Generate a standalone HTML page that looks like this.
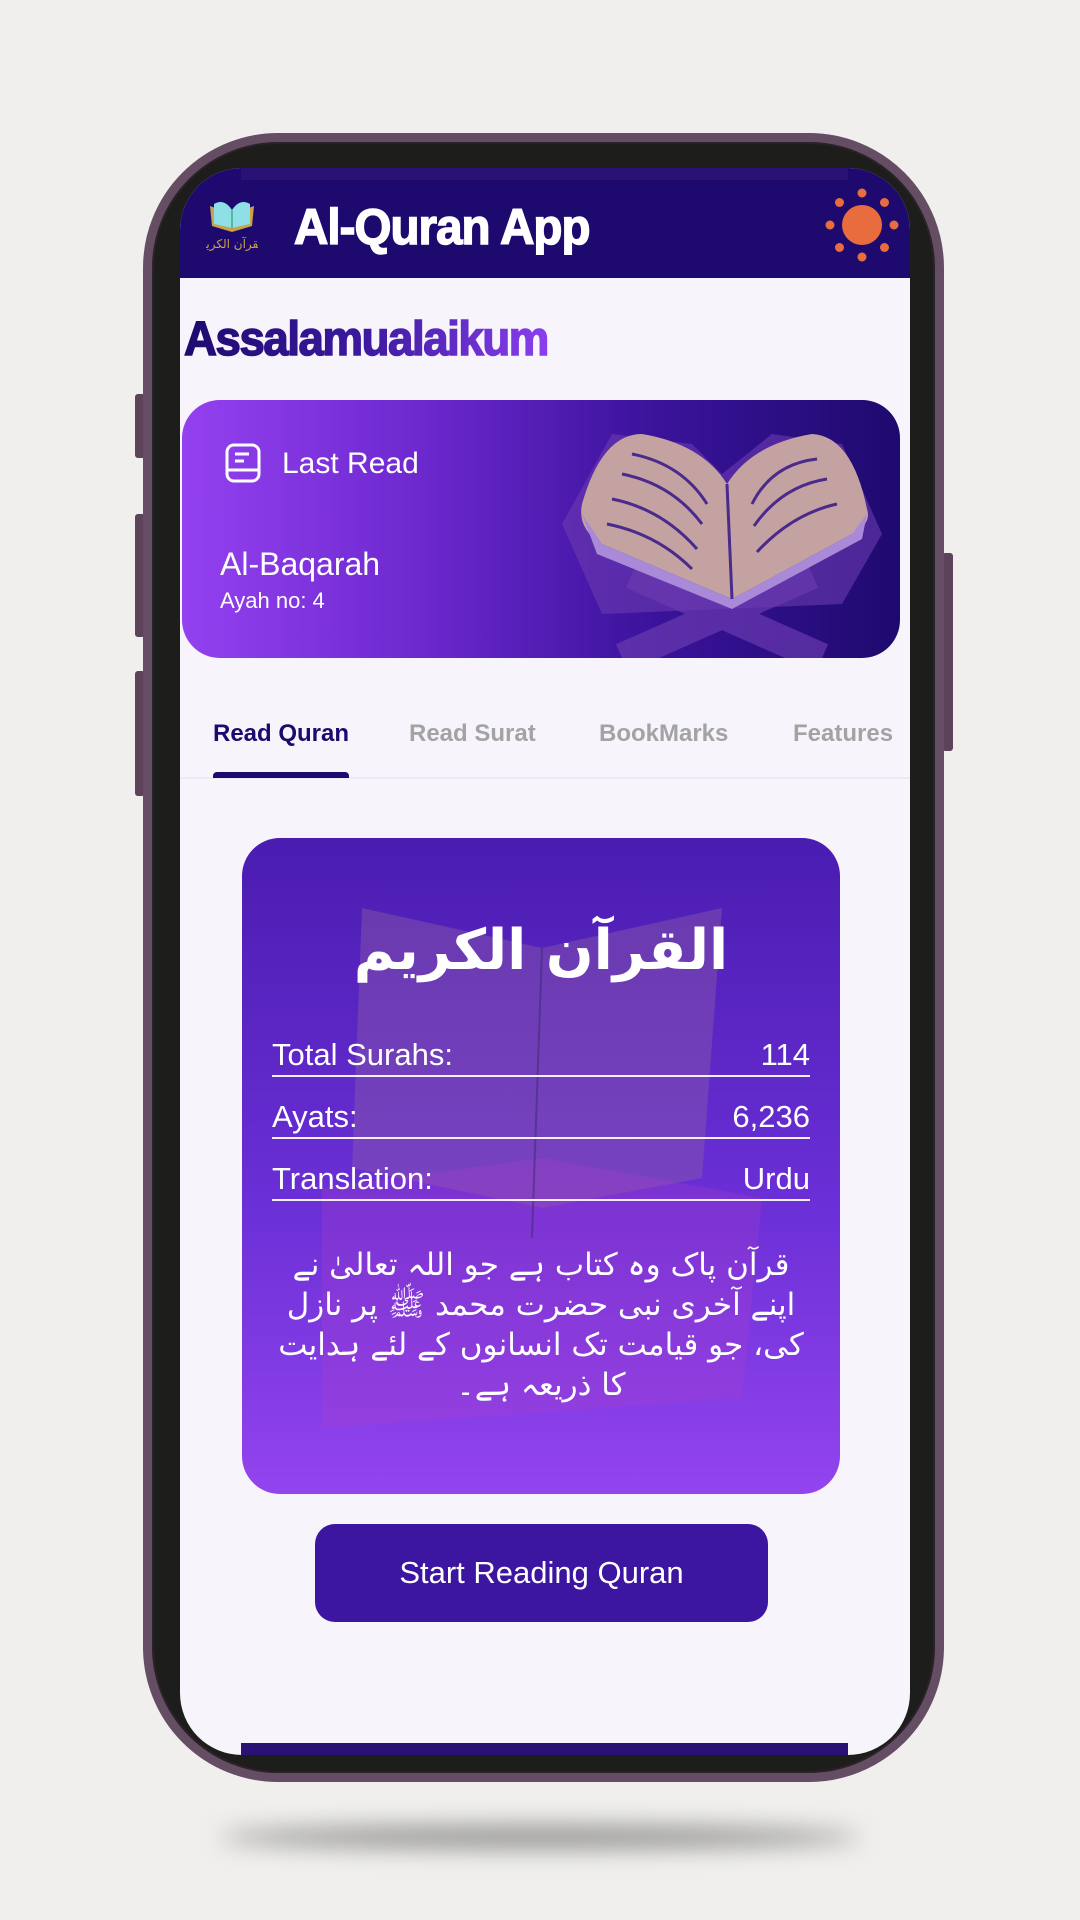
<!DOCTYPE html>
<html><head><meta charset="utf-8"><style>
*{margin:0;padding:0;box-sizing:border-box}
body{width:1080px;height:1920px;background:#f0efed;position:relative;overflow:hidden;font-family:"Liberation Sans","Noto Sans CJK SC",sans-serif}
.shadow{position:absolute;left:220px;top:1826px;width:640px;height:22px;border-radius:50%;background:rgba(0,0,0,.4);filter:blur(12px)}
.btn{position:absolute;background:#5d4359;border-radius:3px}
.phone{position:absolute;left:143px;top:133px;width:801px;height:1649px;border-radius:135px;background:#1d1d1b;border:9px solid #654e63;box-shadow:inset 0 0 0 2px #2a2228}
.screen{position:absolute;left:180px;top:168px;width:730px;height:1587px;border-radius:62px;background:#f7f5fb;overflow:hidden}
.hdr{position:absolute;left:0;top:0;width:730px;height:110px;background:#1e0a6e}
.strip{position:absolute;left:61px;width:607px;height:12px;background:#2a1275}
.title{position:absolute;left:114px;top:30px;color:#fff;font-size:50px;font-weight:900;letter-spacing:-1px;-webkit-text-stroke:1.5px #fff;transform:scaleX(.95);transform-origin:left}
.greet{position:absolute;left:4px;top:144px;font-size:48px;font-weight:900;letter-spacing:-1.5px;-webkit-text-stroke:1.5px;background:linear-gradient(90deg,#1e0a6e 0%,#3c1aa0 50%,#8a3fee 100%);-webkit-background-clip:text;color:transparent;transform:scaleX(.95);transform-origin:left}
.lr{position:absolute;left:2px;top:232px;width:718px;height:258px;border-radius:38px;background:linear-gradient(90deg,#9441f0 0%,#6a27cc 35%,#3b139c 65%,#1e0a6e 100%);overflow:hidden;color:#fff}
.tab{position:absolute;top:552px;font-size:24px;font-weight:bold;color:#a3a3a3}
.card{position:absolute;left:62px;top:670px;width:598px;height:656px;border-radius:38px;background:linear-gradient(180deg,#4a1cb0 0%,#6a2fd6 55%,#9344ee 100%);overflow:hidden;color:#fff}
.row{position:absolute;left:30px;width:538px;height:40px;border-bottom:2.5px solid #f3eefc;font-size:31px;display:flex;justify-content:space-between;align-items:flex-end;padding-bottom:2px}
.urdu{position:absolute;left:25px;top:407px;width:548px;text-align:center;direction:rtl;font-family:"DejaVu Sans",sans-serif;font-size:31px;line-height:40px}
.start{position:absolute;left:135px;top:1356px;width:453px;height:98px;border-radius:20px;background:#3c16a0;color:#fff;font-size:31px;display:flex;align-items:center;justify-content:center}
</style></head><body>
<div class="shadow"></div>
<div class="btn" style="left:135px;top:394px;width:10px;height:64px"></div>
<div class="btn" style="left:135px;top:514px;width:10px;height:123px"></div>
<div class="btn" style="left:135px;top:671px;width:10px;height:125px"></div>
<div class="btn" style="left:942px;top:553px;width:11px;height:198px"></div>
<div class="phone"></div>
<div class="screen">
 <div class="hdr"></div>
 <div class="strip" style="top:0"></div>
 <div class="strip" style="top:1575px;background:#2a1275"></div>
 <svg style="position:absolute;left:26px;top:28px" width="52" height="56" viewBox="0 0 52 56">
  <path d="M4 10 L26 18 L48 10 L46 30 L26 36 L6 30Z" fill="#c9a24a"/>
  <path d="M8 8 Q18 2 26 14 Q34 2 44 8 L44 28 L26 32 L8 28Z" fill="#8fe0e6"/>
  <path d="M26 14 L26 32" stroke="#4a8" stroke-width="1.5"/>
  <text x="26" y="52" text-anchor="middle" font-size="12" fill="#c9a24a" font-family="DejaVu Sans">القرآن الكريم</text>
 </svg>
 <div class="title">Al-Quran App</div>
 <svg style="position:absolute;left:644px;top:19px" width="76" height="76" viewBox="-38 -38 76 76">
  <circle r="20" fill="#e86c3e"/>
  <g fill="#e86c3e"><circle cx="0" cy="-32" r="4.5"/><circle cx="0" cy="32" r="4.5"/><circle cx="-32" cy="0" r="4.5"/><circle cx="32" cy="0" r="4.5"/><circle cx="22.5" cy="-22.5" r="4.5"/><circle cx="-22.5" cy="-22.5" r="4.5"/><circle cx="22.5" cy="22.5" r="4.5"/><circle cx="-22.5" cy="22.5" r="4.5"/></g>
 </svg>
 <div class="greet">Assalamualaikum</div>
 <div class="lr">
  <svg style="position:absolute;left:360px;top:14px" width="358" height="244" viewBox="0 0 358 244">
   <path d="M20 110 L70 20 L150 30 L180 60 L230 20 L300 30 L340 120 L300 190 L60 200Z" fill="#6a3ab0" opacity=".6"/>
   <path d="M90 160 L280 244 M270 160 L80 244" stroke="#6a3ab0" stroke-width="30" opacity=".7"/>
   <path d="M40 90 Q60 20 100 20 Q160 30 185 70 Q210 30 270 20 Q310 22 325 95 Q330 110 310 120 L190 185 L60 130 Q35 115 40 90Z" fill="#c4a2a2"/>
   <path d="M40 100 L60 130 L190 185 L310 120 L325 100 L320 125 L190 195 L55 140Z" fill="#a88ad8"/>
   <path d="M185 70 L190 185" stroke="#4a2a8a" stroke-width="3"/>
   <g stroke="#4a2a8a" stroke-width="3" fill="none"><path d="M90 40 Q140 50 165 90"/><path d="M80 60 Q130 70 160 110"/><path d="M70 85 Q120 95 155 135"/><path d="M65 110 Q115 120 150 155"/><path d="M275 45 Q230 50 210 90"/><path d="M285 65 Q240 72 212 112"/><path d="M295 90 Q250 100 215 138"/></g>
  </svg>
  <svg style="position:absolute;left:43px;top:43px" width="36" height="40" viewBox="0 0 36 40"><rect x="2" y="2" width="32" height="36" rx="7" fill="none" stroke="#fff" stroke-width="3"/><path d="M2 27 H34 M10 11 H24 M10 18 H19" stroke="#fff" stroke-width="3"/></svg>
  <div style="position:absolute;left:100px;top:47px;font-size:30px">Last Read</div>
  <div style="position:absolute;left:38px;top:146px;font-size:32px">Al-Baqarah</div>
  <div style="position:absolute;left:38px;top:188px;font-size:22px">Ayah no: 4</div>
 </div>
 <div class="tab" style="left:33px;color:#1e0a6e">Read Quran</div>
 <div class="tab" style="left:229px">Read Surat</div>
 <div class="tab" style="left:419px">BookMarks</div>
 <div class="tab" style="left:613px">Features</div>
 <div style="position:absolute;left:0;top:609px;width:730px;height:2px;background:#eeeaf4"></div>
 <div style="position:absolute;left:33px;top:604px;width:136px;height:6px;border-radius:4px 4px 0 0;background:#1e0a6e"></div>
 <div class="card">
  <svg style="position:absolute;left:0;top:0" width="598" height="656" viewBox="0 0 598 656">
   <path d="M120 70 L300 110 L480 70 L460 340 L300 370 L110 330Z" fill="#8a5aa8" opacity=".45"/>
   <path d="M80 350 L300 320 L520 360 L500 560 L80 590Z" fill="#b040c8" opacity=".25"/>
   <path d="M300 110 L290 400" stroke="#3a2a6a" stroke-width="2" opacity=".5"/>
  </svg>
  <div style="position:absolute;left:0;top:80px;width:598px;text-align:center;font-family:'DejaVu Sans',sans-serif;font-size:56px;font-weight:bold">القرآن الكريم</div>
  <div class="row" style="top:199px"><span>Total Surahs:</span><span>114</span></div>
  <div class="row" style="top:261px"><span>Ayats:</span><span>6,236</span></div>
  <div class="row" style="top:323px"><span>Translation:</span><span>Urdu</span></div>
  <div class="urdu">قرآن پاک وہ کتاب ہے جو اللہ تعالیٰ نے اپنے آخری نبی حضرت محمد ﷺ پر نازل کی، جو قیامت تک انسانوں کے لئے ہدایت کا ذریعہ ہے۔</div>
 </div>
 <div class="start">Start Reading Quran</div>
</div>
</body></html>
